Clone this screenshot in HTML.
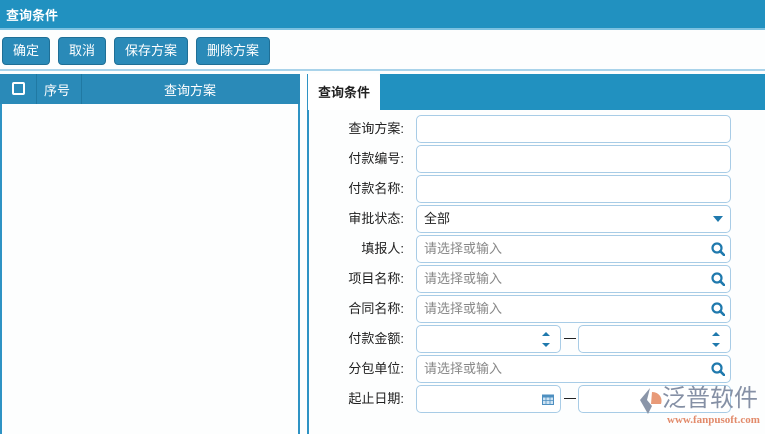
<!DOCTYPE html>
<html><head><meta charset="utf-8"><style>
*{margin:0;padding:0;box-sizing:border-box}
body{width:765px;height:434px;overflow:hidden;background:#fdfefe;font-family:"Liberation Sans","Noto Sans CJK SC",sans-serif;font-size:13px;color:#222;position:relative}
.abs{position:absolute;white-space:nowrap}
.title{left:0;top:0;width:765px;height:30px;background:#2191c0;color:#fff;font-weight:bold;font-size:13px;padding:5px 0 0 6px;border-bottom:2px solid #7cc1e0}
.btn{top:37px;height:28px;background:#2a8ab8;border:1px solid #1f6f96;border-radius:4px;color:#fff;font-size:13px;text-align:center;line-height:26px}
.sep{left:0;top:69px;width:765px;height:2px;background:#a9d3ea}
.lp{left:0;top:74px;width:300px;height:360px;border-left:2px solid #2e93c4;border-right:2px solid #2e93c4}
.lh{left:0;top:74px;width:300px;height:30px;background:#2a8ab8;color:#fff}
.rp{left:307px;top:74px;width:458px;height:360px;border-left:2px solid #2e93c4}
.rbar{left:380px;top:74px;width:385px;height:36px;background:#2191c0}
.tab{left:308px;top:74px;width:72px;height:36px;background:#fff;border-top-right-radius:4px;font-weight:bold;font-size:13px;padding:8px 0 0 10px}
.lbl{width:100px;left:304px;text-align:right;font-size:13px;color:#222}
.in{height:28px;border:1px solid #a8cce6;border-radius:5px;background:#fff;font-size:13px;padding:0 0 0 7px;line-height:25px}
.ph{color:#888}
.ic{position:absolute;right:5px;top:6px}
</style></head><body>
<div class="abs title">查询条件</div>
<div class="abs btn" style="left:2px;width:48px">确定</div>
<div class="abs btn" style="left:58px;width:48px">取消</div>
<div class="abs btn" style="left:114px;width:74px">保存方案</div>
<div class="abs btn" style="left:196px;width:74px">删除方案</div>
<div class="abs sep"></div>
<div class="abs lp"></div>
<div class="abs lh">
 <div class="abs" style="left:12px;top:8px;width:13px;height:13px;border:2px solid #fff;border-radius:2px"></div>
 <div class="abs" style="left:36px;top:0;width:1px;height:30px;background:#2079a3"></div>
 <div class="abs" style="left:44px;top:6px">序号</div>
 <div class="abs" style="left:81px;top:0;width:1px;height:30px;background:#2079a3"></div>
 <div class="abs" style="left:164px;top:6px">查询方案</div>
</div>
<div class="abs rp"></div>
<div class="abs rbar"></div>
<div class="abs tab">查询条件</div>

<div class="abs lbl" style="top:118px">查询方案:</div>
<div class="abs lbl" style="top:148px">付款编号:</div>
<div class="abs lbl" style="top:178px">付款名称:</div>
<div class="abs lbl" style="top:208px">审批状态:</div>
<div class="abs lbl" style="top:238px">填报人:</div>
<div class="abs lbl" style="top:268px">项目名称:</div>
<div class="abs lbl" style="top:298px">合同名称:</div>
<div class="abs lbl" style="top:328px">付款金额:</div>
<div class="abs lbl" style="top:358px">分包单位:</div>
<div class="abs lbl" style="top:388px">起止日期:</div>

<div class="abs in" style="left:416px;top:115px;width:315px"></div>
<div class="abs in" style="left:416px;top:145px;width:315px"></div>
<div class="abs in" style="left:416px;top:175px;width:315px"></div>
<div class="abs in" style="left:416px;top:205px;width:315px">全部<svg class="ic" style="top:10px;right:7px" width="10" height="6"><path d="M0 0H10L5 6Z" fill="#1f79ad"/></svg></div>
<svg width="0" height="0" style="position:absolute"><defs><g id="mg"><circle cx="6" cy="6" r="4.5" fill="none" stroke="#1f79ad" stroke-width="2.2"/><path d="M9.2 9.2L13 13" stroke="#1f79ad" stroke-width="2.6" stroke-linecap="round"/></g></defs></svg>
<div class="abs in ph" style="left:416px;top:235px;width:315px">请选择或输入<svg class="ic" width="14" height="14"><use href="#mg"/></svg></div>
<div class="abs in ph" style="left:416px;top:265px;width:315px">请选择或输入<svg class="ic" width="14" height="14"><use href="#mg"/></svg></div>
<div class="abs in ph" style="left:416px;top:295px;width:315px">请选择或输入<svg class="ic" width="14" height="14"><use href="#mg"/></svg></div>
<div class="abs in" style="left:416px;top:325px;width:145px"><svg class="ic" style="right:10px;top:5px" width="8" height="17"><path d="M0 5L4 1L8 5Z M0 12H8L4 16Z" fill="#1f79ad"/></svg></div>
<div class="abs" style="left:564px;top:338px;width:12px;height:1px;background:#222"></div>
<div class="abs in" style="left:578px;top:325px;width:153px"><svg class="ic" style="right:10px;top:5px" width="8" height="17"><path d="M0 5L4 1L8 5Z M0 12H8L4 16Z" fill="#1f79ad"/></svg></div>
<div class="abs in ph" style="left:416px;top:355px;width:315px">请选择或输入<svg class="ic" width="14" height="14"><use href="#mg"/></svg></div>
<div class="abs in" style="left:416px;top:385px;width:145px"><svg class="ic" style="right:6px;top:7px" width="12" height="12"><rect x="0.5" y="2" width="11" height="9.5" fill="#cfe3f3" stroke="#4d8fc0"/><rect x="0.5" y="2" width="11" height="2.5" fill="#4d8fc0"/><path d="M4 4v8M8 4v8M0 7.5h12" stroke="#4d8fc0" stroke-width="0.8"/></svg></div>
<div class="abs" style="left:564px;top:398px;width:12px;height:1px;background:#222"></div>
<div class="abs in" style="left:578px;top:385px;width:153px"></div>

<svg class="abs" style="left:636px;top:386px" width="30" height="30"><path d="M14 2L4 14L12 28L16 20L11 14Z" fill="#8a95a8"/><path d="M16 6C23 6 27 12 25 18L15 18Z" fill="#e89a78"/></svg>
<div class="abs" style="left:662px;top:385px;font-size:24px;color:#8590a5;line-height:28px">泛普软件</div>
<div class="abs" style="left:667px;top:414px;font-size:11px;color:#e28a6a;font-family:'Liberation Serif',serif;font-weight:bold">www.fanpusoft.com</div>
</body></html>
